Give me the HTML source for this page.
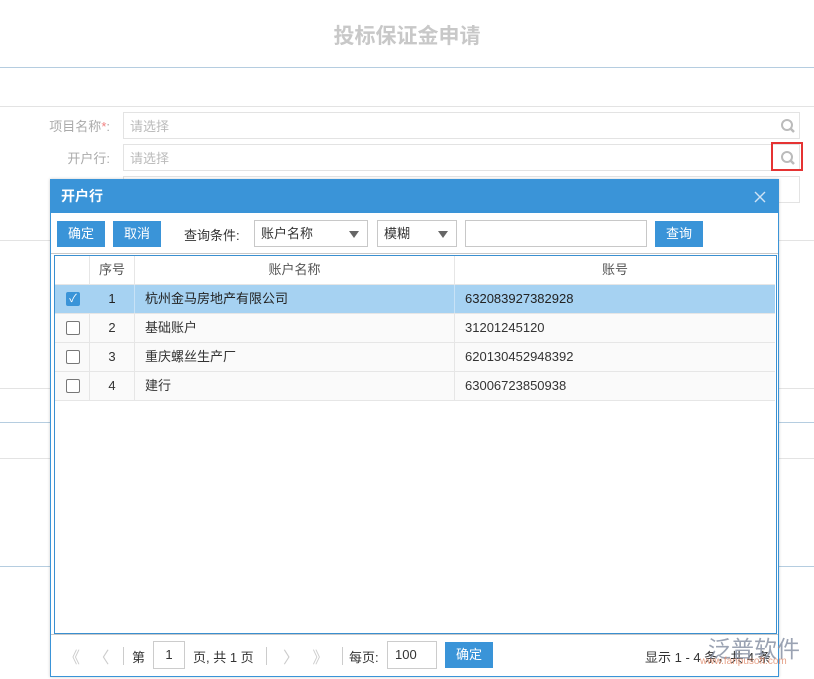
<!DOCTYPE html>
<html><head><meta charset="utf-8"><style>
*{margin:0;padding:0;box-sizing:border-box}
body{width:814px;height:679px;background:#fff;position:relative;overflow:hidden;font-family:"Liberation Sans","Noto Sans CJK SC",sans-serif;font-size:13px;color:#333}
.a{position:absolute}
.hl{position:absolute;left:0;width:814px;height:1px}
.inp{position:absolute;left:123px;width:677px;height:27px;border:1px solid #e3e3e3;color:#bbb;padding:3px 6px;font-size:13px}
.lbl{position:absolute;color:#aaa;font-size:13px;text-align:right;width:110px;left:0}
.btn{position:absolute;background:#3a94d8;color:#fff;height:26px;line-height:26px;text-align:center;font-size:13px}
.sel{position:absolute;border:1px solid #c8c8c8;height:27px;line-height:25px;padding-left:6px;background:#fff}
.sel:after{content:"";position:absolute;right:8px;top:10px;border-left:5px solid transparent;border-right:5px solid transparent;border-top:7px solid #666}
.row{position:absolute;left:55px;width:720px;height:29px;border-bottom:1px solid #e6e6e6;background:#fafafa;line-height:28px}
.row div{position:absolute;top:0;height:28px}
.c0{left:0;width:35px;border-right:1px solid #e6e6e6}
.c1{left:35px;width:45px;border-right:1px solid #e6e6e6;text-align:center}
.c2{left:80px;width:320px;border-right:1px solid #e6e6e6;padding-left:10px}
.c3{left:400px;width:320px;padding-left:10px}
.cb{position:absolute;left:11px;top:7px;width:14px;height:14px;border:1px solid #777;border-radius:2px;background:#fff}
</style></head><body>
<div class="a" style="left:0;top:20px;width:814px;text-align:center;font-size:21px;font-weight:bold;color:#c8c8c8">投标保证金申请</div>
<div class="hl" style="top:67px;background:#b5cde0"></div>
<div class="hl" style="top:106px;background:#e3e3e3"></div>
<div class="lbl" style="top:116px">项目名称<span style="color:#f08080">*</span>:</div>
<div class="inp" style="top:112px">请选择</div>
<div class="lbl" style="top:148px">开户行:</div>
<div class="inp" style="top:144px">请选择</div>
<div class="inp" style="top:176px"></div>
<svg class="a" style="left:780px;top:118px" width="16" height="16" viewBox="0 0 16 16"><circle cx="7" cy="7" r="5" fill="none" stroke="#bbb" stroke-width="2"/><path d="M10.5 10.5L14 14" stroke="#bbb" stroke-width="2.5"/></svg>
<svg class="a" style="left:780px;top:150px" width="16" height="16" viewBox="0 0 16 16"><circle cx="7" cy="7" r="5" fill="none" stroke="#bbb" stroke-width="2"/><path d="M10.5 10.5L14 14" stroke="#bbb" stroke-width="2.5"/></svg>
<div class="a" style="left:771px;top:142px;width:32px;height:29px;border:2px solid #e53333"></div>
<div class="hl" style="top:240px;background:#e3e3e3"></div>
<div class="hl" style="top:388px;background:#e3e3e3"></div>
<div class="hl" style="top:422px;background:#b5cde0"></div>
<div class="hl" style="top:458px;background:#e3e3e3"></div>
<div class="hl" style="top:566px;background:#b5cde0"></div>

<div class="a" style="left:50px;top:179px;width:729px;height:498px;background:#fff;border:1px solid #3a94d8;box-shadow:0 0 3px rgba(0,0,0,.2)">
 <div class="a" style="left:0;top:0;width:727px;height:33px;background:#3a94d8;color:#fff;font-weight:bold;font-size:14px;line-height:33px;padding-left:10px">开户行</div>
 <svg class="a" style="right:12px;top:11px" width="12" height="12" viewBox="0 0 12 12"><path d="M1 1L11 11M11 1L1 11" stroke="#cfe3f5" stroke-width="1.4"/></svg>
</div>
<div class="btn" style="left:57px;top:221px;width:48px">确定</div>
<div class="btn" style="left:113px;top:221px;width:48px">取消</div>
<div class="a" style="left:184px;top:225px">查询条件:</div>
<div class="sel" style="left:254px;top:220px;width:114px">账户名称</div>
<div class="sel" style="left:377px;top:220px;width:80px">模糊</div>
<div class="a" style="left:465px;top:220px;width:182px;height:27px;border:1px solid #c8c8c8"></div>
<div class="btn" style="left:655px;top:221px;width:48px">查询</div>
<div class="hl" style="left:51px;width:727px;top:253px;background:#c8c8c8"></div>
<div class="a" style="left:54px;top:255px;width:723px;height:379px;border:1px solid #3a8fd0"></div>
<div class="row" style="top:256px;background:#fff;color:#555"><div class="c0"></div><div class="c1">序号</div><div class="c2" style="text-align:center;padding:0">账户名称</div><div class="c3" style="text-align:center;padding:0">账号</div></div>
<div class="row" style="top:285px;background:#a6d2f2;color:#222"><div class="c0" style="border-color:#a6d2f2"><span class="cb" style="background:#3a94d8;border-color:#3a94d8;color:#fff;font-size:11px;line-height:12px;text-align:center">✓</span></div><div class="c1" style="border-color:#c8e2f6">1</div><div class="c2" style="border-color:#c8e2f6">杭州金马房地产有限公司</div><div class="c3">632083927382928</div></div>
<div class="row" style="top:314px"><div class="c0"><span class="cb"></span></div><div class="c1">2</div><div class="c2">基础账户</div><div class="c3">31201245120</div></div>
<div class="row" style="top:343px"><div class="c0"><span class="cb"></span></div><div class="c1">3</div><div class="c2">重庆螺丝生产厂</div><div class="c3">620130452948392</div></div>
<div class="row" style="top:372px"><div class="c0"><span class="cb"></span></div><div class="c1">4</div><div class="c2">建行</div><div class="c3">63006723850938</div></div>

<div class="hl" style="left:51px;width:727px;top:634px;background:#c8c8c8"></div>
<div class="a" style="left:64px;top:644px;color:#ccc;font-size:16px">《&nbsp;&nbsp;&nbsp;〈</div>
<div class="a" style="left:123px;top:647px;width:1px;height:18px;background:#ccc"></div>
<div class="a" style="left:132px;top:647px">第</div>
<div class="a" style="left:153px;top:641px;width:32px;height:28px;border:1px solid #ccc;text-align:center;line-height:26px">1</div>
<div class="a" style="left:193px;top:647px">页, 共 1 页</div>
<div class="a" style="left:266px;top:647px;width:1px;height:18px;background:#ccc"></div>
<div class="a" style="left:283px;top:644px;color:#ccc;font-size:16px">〉&nbsp;&nbsp;&nbsp;》</div>
<div class="a" style="left:342px;top:647px;width:1px;height:18px;background:#ccc"></div>
<div class="a" style="left:349px;top:647px">每页:</div>
<div class="a" style="left:387px;top:641px;width:50px;height:28px;border:1px solid #ccc;padding-left:7px;line-height:26px">100</div>
<div class="btn" style="left:445px;top:642px;width:48px;height:26px">确定</div>
<div class="a" style="left:645px;top:647px">显示 1 - 4 条，共 4 条</div>
<div class="a" style="left:708px;top:630px;color:#8a93a6;font-size:23px;opacity:.85">泛普软件</div>
<div class="a" style="left:700px;top:656px;color:#e08a6a;font-size:10px;opacity:.8">www.fanpusoft.com</div>
</body></html>
